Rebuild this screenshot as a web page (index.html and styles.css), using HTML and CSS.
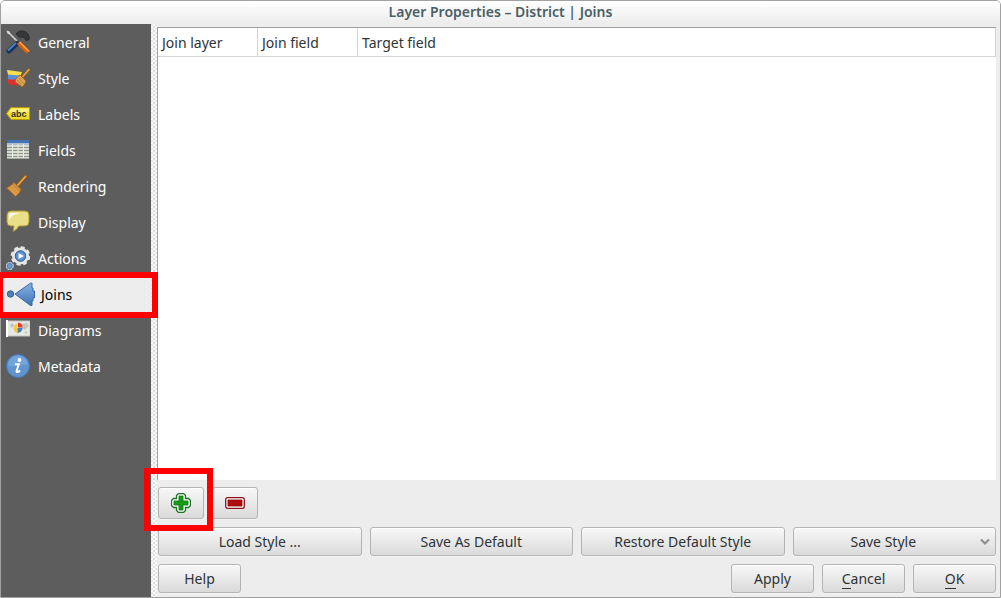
FILE: index.html
```html
<!DOCTYPE html>
<html lang="en">
<head>
<meta charset="utf-8">
<title>Layer Properties – District | Joins</title>
<link rel="stylesheet" href="styles.css">
</head>
<body>
<div class="window">
  <header class="titlebar"><h1 class="title">Layer Properties – District | Joins</h1></header>
  <div class="body">
    <nav class="sidebar">
      <button class="tab" type="button">
        <svg class="icon" viewBox="0 0 24 24"><path d="M2 2l11 11" stroke="#dcdcd8" stroke-width="1.400"/><path d="M.5 .5l3 1 1 3-3-1z" fill="#ddd"/><path d="M10 4C12 .5 17 0 20 2c2 1.500 3.500 4 3.500 7l-3 2-2.500-3-2-1-2 1.500z" fill="#34383a" stroke="#202425" stroke-width=".6"/><path d="M15.500 8l-4 4.500" stroke="#555" stroke-width="2.500"/><path d="M11 13.500L3 21" stroke="#16345f" stroke-width="5" stroke-linecap="round"/><path d="M10 13l-8 7.500" stroke="#4c83c3" stroke-width="1.800"/><path d="M12.500 12.500l9.500 9.500" stroke="#dc6208" stroke-width="4.400"/><path d="M13.500 12l9.500 9.500" stroke="#ffa34d" stroke-width="1.400"/></svg>
        <span>General</span></button>
      <button class="tab" type="button">
        <svg class="icon" viewBox="0 0 24 24"><path d="M1 4l15 2-2 5L2 9z" fill="#f5df50"/><path d="M2 8.500l11 1-2 6-9-2z" fill="#5b8ed4"/><path d="M1 13.500l11 0-1 6-8-1z" fill="#e32c2c"/><path d="M23 3.500l-7 8" stroke="#8e581b" stroke-width="3" stroke-linecap="round"/><path d="M23 3.500l-7 8" stroke="#e6a64c" stroke-width="1.600" stroke-linecap="round"/><path d="M14 9l6 6c-1 3-2 5-4 6l-7-5c0-3 2-5 5-7z" fill="#dba454" stroke="#98621e"/><path d="M13 12l5 6M11.500 14l4 5" stroke="#b97c30" stroke-width=".8"/></svg>
        <span>Style</span></button>
      <button class="tab" type="button">
        <svg class="icon" viewBox="0 0 24 24"><path d="M5 5.500h18.500v12H5L.5 11.500z" fill="#f0dd2e" stroke="#b79c08"/><path d="M5.500 6.500H23v4H3z" fill="#fbf07a"/><text class="tag-text" x="5" y="15">abc</text></svg>
        <span>Labels</span></button>
      <button class="tab" type="button">
        <svg class="icon" viewBox="0 0 24 24"><path d="M1 2h22v19H1z" fill="#d5d9cf"/><path d="M1 2h22v3H1z" fill="#3e74bc"/><path d="M1 5h22v2H1z" fill="#b0bdcb"/><path d="M1 9.500h22M1 12.500h22M1 15.500h22M1 18.500h22" stroke="#8d9489" stroke-width="1"/><path d="M6.500 6v15M12 6v15M17.500 6v15" stroke="#e9ece4"/><path d="M1 20.500h22" stroke="#a5a9a0"/></svg>
        <span>Fields</span></button>
      <button class="tab" type="button">
        <svg class="icon" viewBox="0 0 24 24"><path d="M19.500 2.500l-8 9" stroke="#925617" stroke-width="3.400" stroke-linecap="round"/><path d="M19.500 2.500l-8 9" stroke="#eba54c" stroke-width="1.800" stroke-linecap="round"/><path d="M8 8.500l7 7c-1 3-3 5-5.500 7L.5 14c2-1 5-3 7.500-5.500z" fill="#dc9c48" stroke="#9d6422"/><path d="M6.500 10l7 7" stroke="#b5752b"/><path d="M3 14.500l3-2M5 16.500l3-3M7 18.500l3-3M9 20.500l3-3" stroke="#c98a3c" stroke-width=".7"/></svg>
        <span>Rendering</span></button>
      <button class="tab" type="button">
        <svg class="icon" viewBox="0 0 24 24"><path d="M5 1h14q4 0 4 4v7q0 4-4 4h-6q-2 4-6 5.500l1-5.500H5q-4 0-4-4V5q0-4 4-4z" fill="#e9df88" stroke="#ac942a"/><path d="M3 10V6q0-3 3-3h8C9 4 6 5 3 10z" fill="#fffef0"/></svg>
        <span>Display</span></button>
      <button class="tab" type="button">
        <svg class="icon" viewBox="0 0 24 24"><circle cx="14.500" cy="10" r="8.700" fill="none" stroke="#e5e5e5" stroke-width="2.200" stroke-dasharray="4 2.830"/><circle cx="14.500" cy="10" r="7" fill="#5586c5" stroke="#e5e5e5" stroke-width="3"/><circle cx="14.500" cy="10" r="5.200" fill="#5e91d0" stroke="#3267a5"/><path d="M12.500 7l5.500 3-5.500 3z" fill="#fff"/><circle cx="3.700" cy="20" r="3.400" fill="#6c9ed6" stroke="#c7d0dc" stroke-width="1.400" stroke-dasharray="2 .7"/><circle cx="3.700" cy="20" r="2.500" fill="#6c9ed6" stroke="#4a77aa" stroke-width=".7"/></svg>
        <span>Actions</span></button>
      <button class="tab selected" type="button" aria-current="page">
        <svg class="icon wide" viewBox="0 0 28 24"><defs><linearGradient id="fin" x2="0" y2="1"><stop stop-color="#89b3e5"/><stop offset="1" stop-color="#3f73b5"/></linearGradient></defs><circle cx="3.500" cy="12" r="3.200" fill="#4f80bd" stroke="#315f99"/><path d="M8 12L23.500 1.200h1.500V6h1v3h1.500v7H26v3h-1v4.500h-1.500z" fill="url(#fin)" stroke="#3769a7"/></svg>
        <span>Joins</span></button>
      <button class="tab" type="button">
        <svg class="icon" viewBox="0 0 24 24"><path d="M1 3h23v15H2L0 19V3z" fill="#e7e7e3" stroke="#c4c4c0"/><path d="M1 2v17" stroke="#fff" stroke-width="2"/><path d="M4 6l3-1 1 3-3 2zM15 6l6-1 2 3-4 4-3-2zM18 14l3-1v3z" fill="#c3c5c1"/><path d="M11 5.500A5 5 0 0 0 11 15z" fill="#f3cb48"/><path d="M12 4.500a5 5 0 0 1 4.500 5H12z" fill="#e23b31"/><path d="M16.500 10a5 5 0 0 1-5 5V10z" fill="#497dc0"/></svg>
        <span>Diagrams</span></button>
      <button class="tab" type="button">
        <svg class="icon" viewBox="0 0 24 24"><circle cx="12" cy="12" r="11.500" fill="#6094cf" stroke="#4478b5"/><path d="M2 12a10 10 0 0 1 20-1C16 10 8 14 2 12z" fill="#73a4db"/><circle cx="13.500" cy="6" r="1.900" fill="#fff"/><path d="M9 10.200h3.800l-2.200 6.500q-.3 1.500 1 1.300 1.300-.3 2.500-1.500" fill="none" stroke="#fff" stroke-width="2"/></svg>
        <span>Metadata</span></button>
    </nav>
    <div class="splitter"></div>
    <main class="content">
      <div class="list">
        <table class="joins">
          <thead><tr><th class="col-layer">Join layer</th><th class="col-field">Join field</th><th>Target field</th></tr></thead>
        </table>
      </div>
      <div class="row tools">
        <button class="button tool marked" type="button" aria-label="Add join">
          <svg class="glyph" viewBox="0 0 20 20"><path d="M7.500.5h5l2 2v3h3l2 2v5l-2 2h-3v3l-2 2h-5l-2-2v-3h-3l-2-2v-5l2-2h3v-3z" fill="#fff" stroke="#1c7523" stroke-width="1.300"/><path d="M8 3h4v5h5v4h-5v5H8v-5H3V8h5z" fill="#169b16" stroke="#087408" stroke-width=".8"/></svg>
        </button>
        <button class="button tool" type="button" aria-label="Remove join">
          <svg class="glyph" viewBox="0 0 20 20"><rect x=".7" y="4.700" width="18.600" height="10.600" rx="2" fill="#fff" stroke="#8e1117" stroke-width="1.300"/><path d="M3 7h14v6H3z" fill="#b20d0d" stroke="#870606" stroke-width=".8"/></svg>
        </button>
      </div>
      <div class="row styles">
        <button class="button" type="button">Load Style ...</button>
        <button class="button" type="button">Save As Default</button>
        <button class="button" type="button">Restore Default Style</button>
        <button class="button menu" type="button"><span class="menu-label">Save Style</span><svg class="chevron" viewBox="0 0 10 8"><path d="M1 1.500l4 4 4-4" fill="none" stroke="#8a8d8b" stroke-width="2"/></svg></button>
      </div>
      <div class="row dialog">
        <button class="button action help" type="button">Help</button>
        <button class="button action" type="button">Apply</button>
        <button class="button action" type="button"><span><span class="key">C</span>ancel</span></button>
        <button class="button action" type="button"><span><span class="key">O</span>K</span></button>
      </div>
    </main>
  </div>
</div>
</body>
</html>
```
FILE: styles.css
```css
* { box-sizing: border-box; }

body {
  margin: 0;
  background: #fff;
  color: #2e3436;
  font: 14px/20px "Noto Sans", "Open Sans", sans-serif;
}

button { font: inherit; color: inherit; }

.window {
  display: flex;
  flex-direction: column;
  min-height: 100vh;
  border: 1px solid #a1a1a1;
  border-radius: 5px 5px 0 0;
  background: #ededed;
}

.titlebar {
  height: 23px;
  border-radius: 4px 4px 0 0;
  background: linear-gradient(#fff, #ececec);
}

.title {
  margin: 0;
  font-size: 14px;
  font-weight: 600;
  line-height: 22px;
  text-align: center;
  color: #4a5f66;
}

.body { display: flex; flex: 1; }

.sidebar {
  display: flex;
  flex-direction: column;
  width: 150px;
  padding-top: 1px;
  background: #5d5d5d;
}

.tab {
  position: relative;
  display: flex;
  align-items: center;
  gap: 8px;
  height: 36px;
  padding: 0 5px;
  border: 0;
  background: none;
  color: #fff;
  text-align: left;
}

.selected {
  padding-left: 6px;
  gap: 6px;
  background: #ededed;
  color: #000;
}

.selected::after,
.marked::after {
  content: "";
  position: absolute;
  z-index: 1;
  border: 6px solid #f00;
  pointer-events: none;
}

.selected::after { inset: -5px -7px -5px -4px; }

.marked::after { inset: -20px -10px -13px -15px; }

.icon {
  flex: none;
  width: 24px;
  height: 24px;
  margin-bottom: 2px;
}

.wide { width: 28px; }

.tag-text {
  font: bold 9px "Liberation Sans", sans-serif;
  fill: #333;
}

.splitter {
  width: 6px;
  background:
    conic-gradient(#fafafa 25%, #dedede 0 50%, #fafafa 0 75%, #e8e8e8 0) 0 0 / 4px 4px;
}

.content {
  display: flex;
  flex: 1;
  flex-direction: column;
  padding: 3px 4px 4px 0;
}

.list {
  flex: 1;
  border: solid #a1a1a1;
  border-width: 1px 0 0 1px;
  background: #fff;
}

.joins {
  width: 100%;
  border-collapse: separate;
  border-spacing: 0;
  table-layout: fixed;
}

.joins th {
  height: 29px;
  padding: 2px 4px 0;
  border-right: 1px solid #d5d5d5;
  border-bottom: 1px solid #d5d5d5;
  font-weight: 400;
  text-align: left;
}

.joins .col-layer,
.joins .col-field { width: 100px; }

.row {
  display: flex;
  gap: 8px;
  padding-left: 1px;
}

.tools { margin-top: 7px; }
.styles, .dialog { margin-top: 8px; }

.styles {
  display: grid;
  grid-template-columns: repeat(4, 1fr);
}

.button {
  position: relative;
  display: flex;
  align-items: center;
  justify-content: center;
  height: 29px;
  padding: 0;
  border: 1px solid #b4b4b4;
  border-radius: 3px;
  background: linear-gradient(#f8f8f8, #dadada);
  box-shadow: inset 0 1px #fff, 0 1px #f5f5f5;
}

.tool { width: 46px; height: 32px; }

.glyph { width: 20px; height: 20px; }

.action { width: 83px; }

.help { margin-right: auto; }

.menu { gap: 7px; padding-right: 5px; }

.menu-label { flex: 1; }

.chevron { width: 10px; height: 8px; }

.key { border-bottom: 1px solid #2e3436; }
```
